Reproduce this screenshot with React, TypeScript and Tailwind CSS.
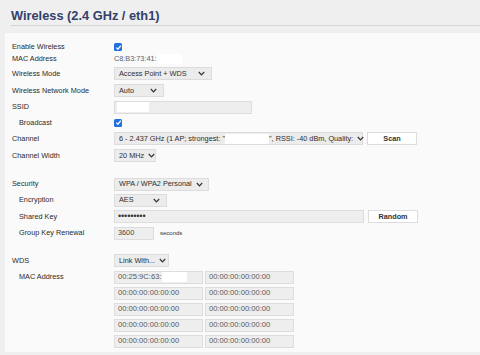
import React from "react";

const Chevron = () => (
  <svg width="7" height="5" viewBox="0 0 7 5" className="shrink-0">
    <polyline points="0.8,1 3.5,3.8 6.2,1" fill="none" stroke="#333" strokeWidth="1.2" />
  </svg>
);

const Check = () => (
  <span className="flex h-[8px] w-[8px] items-center justify-center rounded-[1.5px] bg-[#1f6fe0]">
    <svg width="7" height="7" viewBox="0 0 8 8">
      <polyline points="1.5,4.2 3.3,6 6.6,2" fill="none" stroke="#fff" strokeWidth="1.4" />
    </svg>
  </span>
);

const Select = ({ w, children }: { w: string; children: React.ReactNode }) => (
  <div
    className={`flex h-[13px] items-center justify-between gap-1 border border-[#dcdcdc] bg-[#ececec] pl-[4px] pr-[6px] text-[#2e2e2e] ${w}`}
  >
    <span className="flex items-center whitespace-nowrap">{children}</span>
    <Chevron />
  </div>
);

const Input = ({ w, children }: { w: string; children?: React.ReactNode }) => (
  <div
    className={`flex h-[13px] items-center border border-[#dddddd] bg-[#eeeeee] pl-[2px] text-[#555] ${w}`}
  >
    {children}
  </div>
);

const Button = ({ w, children }: { w: string; children: React.ReactNode }) => (
  <div
    className={`flex h-[13px] items-center justify-center border border-[#dddddd] bg-white font-bold text-[#333] ${w}`}
  >
    {children}
  </div>
);

const Row = ({
  label,
  h,
  indent,
  children,
}: {
  label?: string;
  h: string;
  indent?: boolean;
  children?: React.ReactNode;
}) => (
  <div className={`flex items-center ${h}`}>
    <div className={`w-[102px] shrink-0 text-[#2a2a2a] ${indent ? "pl-[7px]" : ""}`}>{label}</div>
    <div className="flex items-center gap-[4px]">{children}</div>
  </div>
);

const Blank = ({ w }: { w: string }) => <span className={`inline-block h-[10px] bg-white ${w}`} />;

const macs = [
  ["00:25:9C:63:", "00:00:00:00:00:00"],
  ["00:00:00:00:00:00", "00:00:00:00:00:00"],
  ["00:00:00:00:00:00", "00:00:00:00:00:00"],
  ["00:00:00:00:00:00", "00:00:00:00:00:00"],
  ["00:00:00:00:00:00", "00:00:00:00:00:00"],
];

export default function App() {
  return (
    <div
      className="flex h-[355px] w-[480px] flex-col overflow-hidden bg-[#efefef] text-[7.3px] leading-none"
      style={{ fontFamily: '"Liberation Sans", Arial, sans-serif' }}
    >
      <div className="ml-[11px] mt-[10px] h-[16px] border-b border-[#d6d6d6]">
        <h1 className="text-[12.8px] font-bold leading-none text-[#33406a]">Wireless (2.4 GHz / eth1)</h1>
      </div>

      <div className="ml-[5px] mt-[7px] h-[319px] overflow-hidden bg-[#fafafa] pl-[7px] pt-[8px]">
        <Row label="Enable Wireless" h="h-[12px]">
          <Check />
        </Row>
        <Row label="MAC Address" h="h-[12px]">
          <span className="flex items-center text-[#5c6270]">
            C8:B3:73:41:
            <Blank w="w-[24px] ml-[1px]" />
          </span>
        </Row>
        <Row label="Wireless Mode" h="h-[17px]">
          <Select w="w-[98px]">Access Point + WDS</Select>
        </Row>
        <Row label="Wireless Network Mode" h="h-[17px]">
          <Select w="w-[50px]">Auto</Select>
        </Row>
        <Row label="SSID" h="h-[16px]">
          <Input w="w-[138px]">
            <Blank w="w-[32px]" />
          </Input>
        </Row>
        <Row label="Broadcast" h="h-[15px]" indent>
          <Check />
        </Row>
        <Row label="Channel" h="h-[17px]">
          <Select w="w-[249px]">
            6 - 2.437 GHz (1 AP; strongest: "
            <Blank w="w-[44px]" />
            ", RSSI: -40 dBm, Quality:
          </Select>
          <Button w="w-[50px]">Scan</Button>
        </Row>
        <Row label="Channel Width" h="h-[17px]">
          <Select w="w-[42px]">20 MHz</Select>
        </Row>
        <div className="h-[12px]" />
        <Row label="Security" h="h-[16px]">
          <Select w="w-[95px]">WPA / WPA2 Personal</Select>
        </Row>
        <Row label="Encryption" h="h-[16px]" indent>
          <Select w="w-[53px]">AES</Select>
        </Row>
        <Row label="Shared Key" h="h-[17px]" indent>
          <Input w="w-[250px]">
            <span className="pl-[1px] text-[9px] tracking-[-0.1px] text-[#333]">•••••••••</span>
          </Input>
          <Button w="w-[50px]">Random</Button>
        </Row>
        <Row label="Group Key Renewal" h="h-[16px]" indent>
          <Input w="w-[40px]">
            <span className="pl-[1px] text-[#444]">3600</span>
          </Input>
          <span className="ml-[2px] text-[6px] text-[#333]">seconds</span>
        </Row>
        <div className="h-[11px]" />
        <Row label="WDS" h="h-[17px]">
          <Select w="w-[55px]">Link With...</Select>
        </Row>
        {macs.map((pair, i) => (
          <div key={i} className="flex h-[16px] items-center">
            <div className="w-[102px] shrink-0 pl-[7px] text-[#2a2a2a]">{i === 0 ? "MAC Address" : ""}</div>
            <div className="flex items-center gap-[2px] text-[7.6px]">
              <Input w="w-[89px]">
                <span className="flex items-center pl-[1px]">
                  {pair[0]}
                  {i === 0 && <Blank w="w-[25px]" />}
                </span>
              </Input>
              <Input w="w-[89px]">
                <span className="pl-[1px]">{pair[1]}</span>
              </Input>
            </div>
          </div>
        ))}
      </div>
    </div>
  );
}
